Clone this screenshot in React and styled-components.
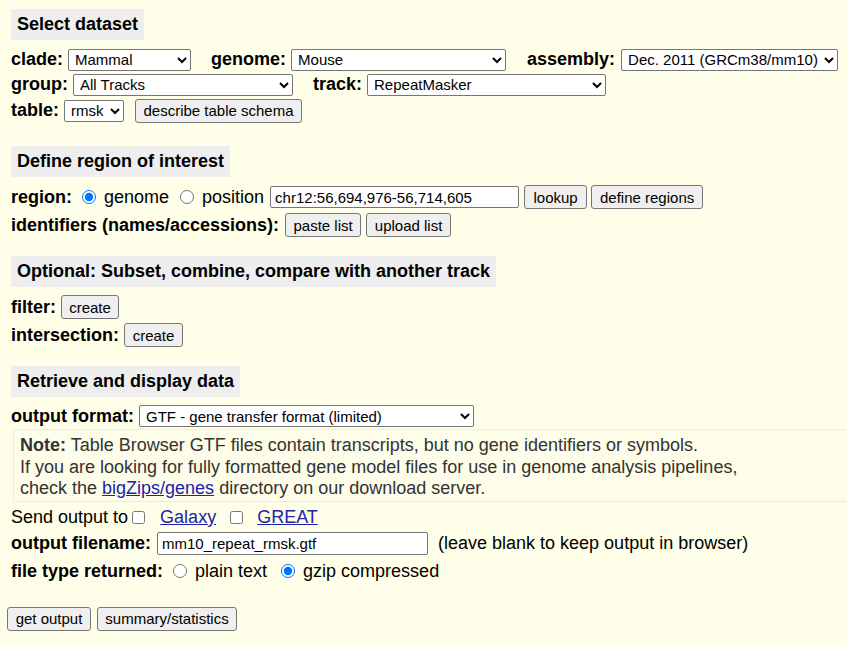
import React from 'react';
import styled, { createGlobalStyle } from 'styled-components';

const GlobalStyle = createGlobalStyle`
  html, body {
    margin: 0;
    padding: 0;
    background: #fffee8;
  }
  body {
    font-family: "Liberation Sans", Arial, sans-serif;
    font-size: 18px;
    color: #000;
  }
`

const Page = styled.div`
  padding: 9px 0 0 11px;
  width: 836px;
  height: 637px;
  overflow: hidden;
`

const SectionHeader = styled.div`
  display: inline-flex;
  align-items: center;
  height: 31px;
  padding: 0 6px;
  margin-top: ${p => p.top || 0}px;
  background: #eeeeee;
  font-weight: bold;
  font-size: 18px;
`

const Row = styled.div`
  display: flex;
  align-items: center;
  height: ${p => p.h || 26}px;
  margin-top: ${p => p.top || 0}px;
  margin-left: ${p => p.left || 0}px;
  white-space: nowrap;
`

const Label = styled.span`
  font-weight: ${p => (p.plain ? 'normal' : 'bold')};
  margin-right: ${p => p.gap ?? 6}px;
  margin-left: ${p => p.lead || 0}px;
`

const Select = styled.select`
  width: ${p => p.w}px;
  height: 22px;
  font-family: "Liberation Sans", Arial, sans-serif;
  font-size: 15px;
  color: #000;
  background: #fff;
  border: 1px solid #767676;
  border-radius: 2px;
  padding: 0 2px;
  margin: 0;
`

const TextInput = styled.input`
  width: ${p => p.w}px;
  height: ${p => p.h || 22}px;
  box-sizing: border-box;
  font-family: "Liberation Sans", Arial, sans-serif;
  font-size: 15px;
  color: #000;
  background: #fff;
  border: 1px solid #767676;
  border-radius: 2px;
  padding: 1px 4px;
  margin: 0;
`

const Button = styled.button`
  width: ${p => p.w}px;
  height: 24px;
  box-sizing: border-box;
  font-family: "Liberation Sans", Arial, sans-serif;
  font-size: 15px;
  color: #000;
  background: #efefef;
  border: 1px solid #767676;
  border-radius: 3px;
  padding: 0;
  margin: 0 ${p => p.after ?? 4}px 0 ${p => p.before || 0}px;
`

const Radio = styled.input.attrs({ type: 'radio' })`
  width: 14px;
  height: 14px;
  margin: 0 ${p => p.after ?? 8}px 0 ${p => p.before || 0}px;
  accent-color: #0075ff;
`

const Check = styled.input.attrs({ type: 'checkbox' })`
  width: 13px;
  height: 13px;
  margin: 0 ${p => p.after ?? 14}px 0 ${p => p.before || 0}px;
`

const Option = styled.span`
  margin-right: ${p => p.gap ?? 0}px;
`

const Link = styled.a`
  color: #2222b0;
  text-decoration: underline;
  margin-right: ${p => p.gap ?? 0}px;
`

const NoteBox = styled.div`
  margin: 0 0 0 2px;
  width: 860px;
  height: 73px;
  box-sizing: border-box;
  padding: 5px 6px;
  border: 1px solid #ecebdc;
  background: #fdfde9;
  color: #333;
  font-size: 18px;
  line-height: 21.5px;
`

export default function App() {
  return (
    <Page>
      <GlobalStyle />
      <SectionHeader>Select dataset</SectionHeader>
      <Row h={25} top={7}>
        <Label gap={5}>clade:</Label>
        <Select w={123} defaultValue="Mammal"><option>Mammal</option></Select>
        <Label lead={20} gap={5}>genome:</Label>
        <Select w={215} defaultValue="Mouse"><option>Mouse</option></Select>
        <Label lead={21} gap={6}>assembly:</Label>
        <Select w={217}><option>Dec. 2011 (GRCm38/mm10)</option></Select>
      </Row>
      <Row h={25}>
        <Label gap={5}>group:</Label>
        <Select w={220}><option>All Tracks</option></Select>
        <Label lead={20} gap={5}>track:</Label>
        <Select w={239}><option>RepeatMasker</option></Select>
      </Row>
      <Row h={27}>
        <Label gap={5}>table:</Label>
        <Select w={60}><option>rmsk</option></Select>
        <Button w={167} before={11}>describe table schema</Button>
      </Row>

      <SectionHeader top={22}>Define region of interest</SectionHeader>
      <Row h={28} top={6}>
        <Label gap={10}>region:</Label>
        <Radio name="region" defaultChecked />
        <Option gap={11}>genome</Option>
        <Radio name="region" after={8} />
        <Option gap={6}>position</Option>
        <TextInput w={249} defaultValue="chr12:56,694,976-56,714,605" />
        <Button w={63} before={5}>lookup</Button>
        <Button w={112}>define regions</Button>
      </Row>
      <Row h={28}>
        <Label gap={6}>identifiers (names/accessions):</Label>
        <Button w={76} after={5}>paste list</Button>
        <Button w={85}>upload list</Button>
      </Row>

      <SectionHeader top={17}>Optional: Subset, combine, compare with another track</SectionHeader>
      <Row h={28} top={6}>
        <Label gap={5}>filter:</Label>
        <Button w={58}>create</Button>
      </Row>
      <Row h={28}>
        <Label gap={5}>intersection:</Label>
        <Button w={59}>create</Button>
      </Row>

      <SectionHeader top={17}>Retrieve and display data</SectionHeader>
      <Row h={26} top={6}>
        <Label gap={5}>output format:</Label>
        <Select w={335}><option>GTF - gene transfer format (limited)</option></Select>
      </Row>
      <NoteBox>
        <b>Note:</b> Table Browser GTF files contain transcripts, but no gene identifiers or symbols.<br />
        If you are looking for fully formatted gene model files for use in genome analysis pipelines,<br />
        check the <Link href="#">bigZips/genes</Link> directory on our download server.
      </NoteBox>
      <Row h={26} top={2}>
        <Label plain gap={4}>Send output to</Label>
        <Check after={15} />
        <Link gap={14}>Galaxy</Link>
        <Check after={14} />
        <Link>GREAT</Link>
      </Row>
      <Row h={27}>
        <Label gap={6}>output filename:</Label>
        <TextInput w={271} h={23} defaultValue="mm10_repeat_rmsk.gtf" />
        <Label plain lead={10}>(leave blank to keep output in browser)</Label>
      </Row>
      <Row h={28}>
        <Label gap={10}>file type returned:</Label>
        <Radio name="ft" after={8} />
        <Option gap={14}>plain text</Option>
        <Radio name="ft" defaultChecked />
        <Option>gzip compressed</Option>
      </Row>
      <Row h={27} top={20} left={-4}>
        <Button w={84} after={6}>get output</Button>
        <Button w={140}>summary/statistics</Button>
      </Row>
    </Page>
  );
}
